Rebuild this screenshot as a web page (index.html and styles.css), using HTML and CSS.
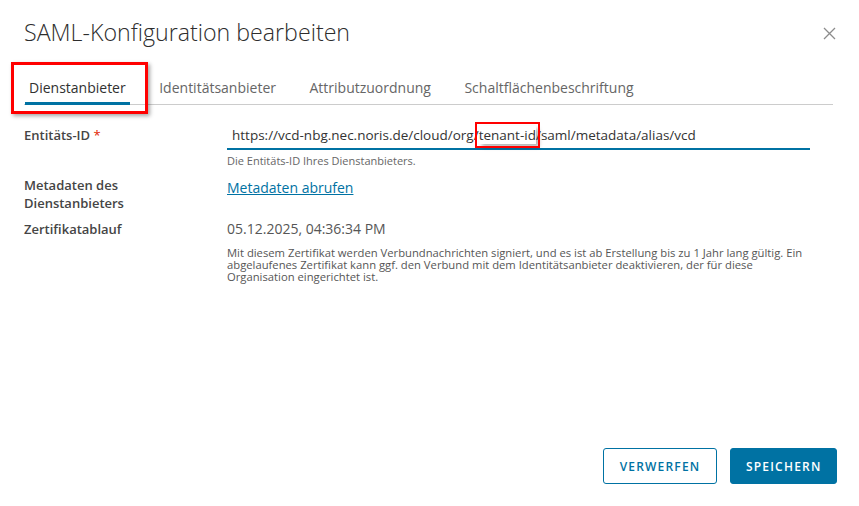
FILE: index.html
```html
<!DOCTYPE html>
<html lang="de">
<head>
    <meta charset="UTF-8">
    <meta name="viewport" content="width=device-width, initial-scale=1.0">
    <title>SAML-Konfiguration bearbeiten</title>
    <link rel="stylesheet" href="styles.css">
</head>
<body>
    <div class="modal">
        <div class="modal-header">
            <h1>SAML-Konfiguration bearbeiten</h1>
            <button class="close-btn" aria-label="Schließen">
                <svg width="13" height="13" viewBox="0 0 13 13">
                    <path d="M1 1 L12 12 M12 1 L1 12" stroke="#8c8c8c" stroke-width="1.3" fill="none"/>
                </svg>
            </button>
        </div>

        <ul class="tabs">
            <li class="tab active marked">Dienstanbieter</li>
            <li class="tab">Identitätsanbieter</li>
            <li class="tab">Attributzuordnung</li>
            <li class="tab">Schaltflächenbeschriftung</li>
        </ul>

        <div class="form">
            <div class="row">
                <label class="label">Entitäts-ID <span class="required">*</span></label>
                <div class="field">
                    <div class="input">https://vcd-nbg.nec.noris.de/cloud/org/<span class="mark">tenant-id</span>/saml/metadata/alias/vcd</div>
                    <div class="helper">Die Entitäts-ID Ihres Dienstanbieters.</div>
                </div>
            </div>
            <div class="row">
                <label class="label">Metadaten des<br>Dienstanbieters</label>
                <div class="field">
                    <a class="link" href="#">Metadaten abrufen</a>
                </div>
            </div>
            <div class="row">
                <label class="label">Zertifikatablauf</label>
                <div class="field">
                    <div class="value">05.12.2025, 04:36:34 PM</div>
                    <p class="note">Mit diesem Zertifikat werden Verbundnachrichten signiert, und es ist ab Erstellung bis zu 1 Jahr lang gültig. Ein abgelaufenes Zertifikat kann ggf. den Verbund mit dem Identitätsanbieter deaktivieren, der für diese Organisation eingerichtet ist.</p>
                </div>
            </div>
        </div>

        <div class="modal-footer">
            <button class="btn btn-outline">Verwerfen</button>
            <button class="btn btn-primary">Speichern</button>
        </div>
    </div>
</body>
</html>
```

FILE: styles.css
```css
/* General */
body {
    margin: 0;
    background: #fff;
    font-family: "Open Sans", "Liberation Sans", sans-serif;
    color: #454545;
}

.modal {
    display: flex;
    flex-direction: column;
    height: 100vh;
    box-sizing: border-box;
    padding: 17px 22px 22px 24px;
}

/* Header */
.modal-header {
    display: flex;
    justify-content: space-between;
    align-items: center;
    height: 30px;
}

h1 {
    margin: 0;
    font-size: 23.2px;
    font-weight: 300;
    line-height: 30px;
    color: #2d2d2d;
}

.close-btn {
    background: none;
    border: none;
    padding: 0;
    margin: 2px 1px 0 0;
    width: 13px;
    height: 13px;
    cursor: pointer;
}

/* Tabs */
.tabs {
    list-style: none;
    display: flex;
    margin: 22px 4px 0 0;
    padding: 0;
    border-bottom: 1px solid #ccc;
}

.tab {
    position: relative;
    height: 34px;
    padding: 2px 4px 0;
    line-height: 34px;
    margin-bottom: -1px;
    margin-right: 25.5px;
    font-size: 14px;
    color: #666;
    cursor: pointer;
}

.tab:first-child {
    margin-left: 1px;
}

.tab.active {
    color: #313131;
    box-shadow: inset 0 -3px 0 #0072a3;
}

/* red annotation frames */
.tab.marked::after {
    content: "";
    position: absolute;
    left: -14px;
    right: -18px;
    top: -7px;
    bottom: -9px;
    border: 3px solid #f00;
    box-shadow: 2px 2px 4px rgba(0, 0, 0, 0.35);
}

.mark {
    outline: 2px solid #f00;
    outline-offset: 2px;
    box-shadow: 3px 3px 4px rgba(0, 0, 0, 0.3);
}

/* Form */
.form {
    flex: 1;
    padding-top: 21px;
}

.row {
    display: flex;
    margin-bottom: 8px;
}

.label {
    width: 203px;
    flex-shrink: 0;
    font-size: 13px;
    font-weight: 600;
    line-height: 18px;
    color: #454545;
}

.required {
    color: #e12200;
    font-weight: 400;
}

.field {
    width: 583px;
}

.input {
    font-size: 13.5px;
    line-height: 18px;
    padding: 0 0 4px 5px;
    color: #333;
    border-bottom: 2px solid #0072a3;
}

.helper {
    font-size: 11px;
    color: #666;
    margin-top: 4px;
    line-height: 14px;
}

.link {
    font-size: 14px;
    line-height: 18px;
    color: #0072a3;
}

.value {
    font-size: 14px;
    line-height: 18px;
    color: #565656;
}

.note {
    margin: 9px 0 0;
    font-size: 11.25px;
    line-height: 12px;
    color: #565656;
}

/* Footer */
.modal-footer {
    display: flex;
    justify-content: flex-end;
    gap: 13px;
}

.btn {
    height: 36px;
    border-radius: 3px;
    font-family: inherit;
    font-size: 12px;
    font-weight: 600;
    letter-spacing: 1.2px;
    text-transform: uppercase;
    cursor: pointer;
}

.btn-outline {
    padding: 0 16px;
    background: #fff;
    color: #0072a3;
    border: 1px solid #0072a3;
}

.btn-primary {
    padding: 0 14.5px;
    background: #0072a3;
    color: #fff;
    border: 1px solid #0072a3;
}
```
